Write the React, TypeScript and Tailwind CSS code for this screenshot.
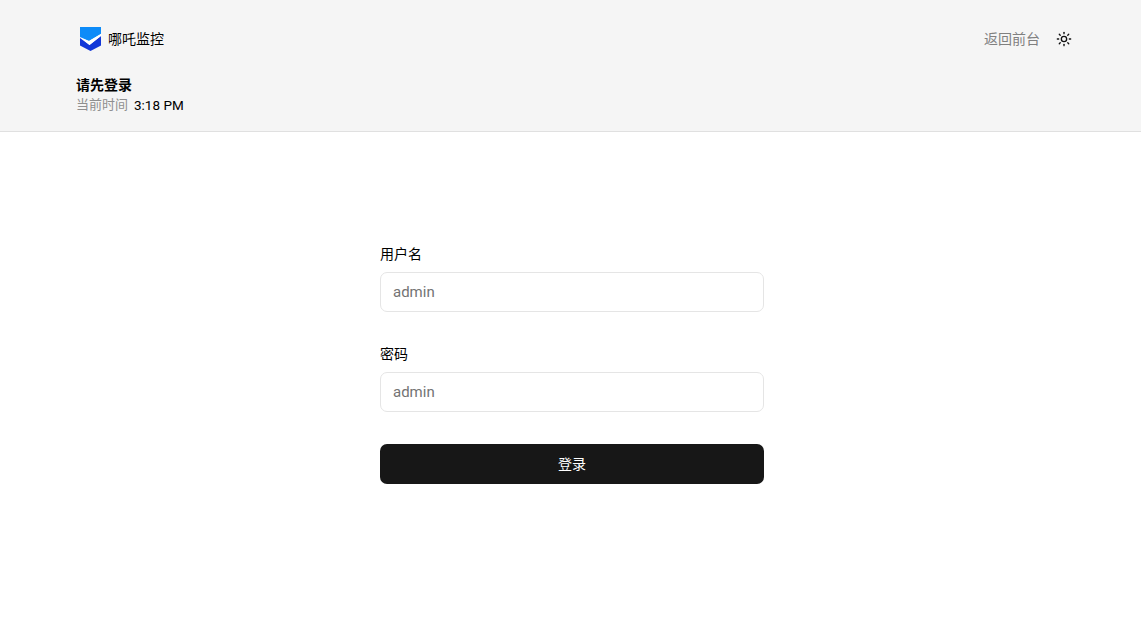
import { Sun } from 'lucide-react'

function Logo() {
  return (
    <svg width="22" height="24" viewBox="0 0 22 24" className="shrink-0">
      <path d="M0 0H21V7L9 14L0 10Z" fill="#0d8bf8" />
      <path d="M0 11L9.5 18L21 9V18.5L10.5 24L0 18.5Z" fill="#1237d8" />
      <path d="M1 11L9 14L21.5 6.5V8.5L9.5 18Z" fill="#ffffff" />
    </svg>
  )
}

export default function App() {
  return (
    <div className="min-h-screen bg-white text-black text-sm font-['Roboto','Noto_Sans_CJK_SC',sans-serif]">
      {/* Header */}
      <div className="h-[132px] bg-[#f5f5f5] border-b border-[#e0e0e0] pl-[76px] pr-[69px] pt-[27px]">
        <div className="flex items-center justify-between h-6">
          <div className="flex items-center gap-1.5 pl-1">
            <Logo />
            <span className="leading-6">哪吒监控</span>
          </div>
          <div className="flex items-center gap-4">
            <span className="text-[#808080]">返回前台</span>
            <Sun className="w-4 h-4 text-[#111111]" strokeWidth={2} />
          </div>
        </div>
        <div className="mt-[24px] font-bold leading-5">请先登录</div>
        <div className="flex items-center gap-1.5 leading-5">
          <span className="text-[13px] text-[#8f8f8f]">当前时间</span>
          <span className="text-[13.5px]">3:18 PM</span>
        </div>
      </div>

      {/* Form */}
      <div className="w-[384px] ml-[380px] pt-[112px]">
        <div className="leading-5 mb-2">用户名</div>
        <input
          placeholder="admin"
          className="block w-full h-10 px-3 rounded-[7px] border border-[#e5e5e5] text-[15px] outline-none placeholder:text-[#737373]"
        />
        <div className="leading-5 mb-2 mt-8">密码</div>
        <input
          placeholder="admin"
          className="block w-full h-10 px-3 rounded-[7px] border border-[#e5e5e5] text-[15px] outline-none placeholder:text-[#737373]"
        />
        <button className="block w-full h-10 mt-8 rounded-[7px] bg-[#171717] text-white text-sm">登录</button>
      </div>
    </div>
  )
}
